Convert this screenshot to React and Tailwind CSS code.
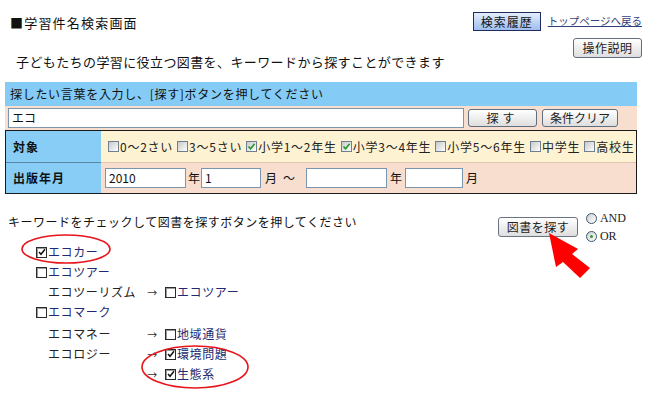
import React from 'react';

const jp = { fontFamily: '"Noto Sans CJK JP", "Noto Sans", sans-serif' };

// 画面上部のボタン（グレーのグラデーション）
function GrayButton({ children, className = '' }) {
  return (
    <button
      className={`flex items-center justify-center rounded-[3px] border border-[#5f6f80] bg-linear-to-b from-white to-[#dedede] text-[12px] leading-none text-[#222] ${className}`}
    >
      {children}
    </button>
  );
}

// 条件欄のチェックボックス（緑のチェック）
function FormCheck({ checked }) {
  return (
    <span className="flex h-[11px] w-[11px] shrink-0 items-center justify-center border border-[#6f7f90] bg-linear-to-br from-[#c9c9c9] to-white">
      {checked && (
        <svg width="9" height="9" viewBox="0 0 9 9">
          <path d="M1.5 4.5 L3.6 6.8 L7.6 1.8" fill="none" stroke="#1e9a2a" strokeWidth="1.6" />
        </svg>
      )}
    </span>
  );
}

// キーワード一覧のチェックボックス（黒枠）
function TreeCheck({ checked }) {
  return (
    <span className="mr-[1px] flex h-[11px] w-[11px] shrink-0 items-center justify-center border-[1.5px] border-[#2b2b2b] bg-white shadow-[inset_1px_1px_0_#9a9a9a]">
      {checked && (
        <svg width="8" height="8" viewBox="0 0 8 8">
          <path d="M1 4 L3 6.3 L7 1.3" fill="none" stroke="#111" strokeWidth="1.5" />
        </svg>
      )}
    </span>
  );
}

function TextBox({ value = '', className = '' }) {
  return (
    <div className={`flex h-[20px] items-center border border-[#7d96b0] bg-white px-[3px] text-[12px] text-[#111] ${className}`}>
      {value}
    </div>
  );
}

function Arrow() {
  return <span className="w-[25px] text-center text-[10px] text-[#333]">→</span>;
}

function Keyword({ checked, children }) {
  return (
    <span className="flex items-center">
      <TreeCheck checked={checked} />
      <span className="text-[12px] tracking-[0.6px] text-[#1f2b70]">{children}</span>
    </span>
  );
}

const targets = [
  ['0～2さい', false],
  ['3～5さい', false],
  ['小学1～2年生', true],
  ['小学3～4年生', true],
  ['小学5～6年生', false],
  ['中学生', false],
  ['高校生', false],
];

export default function App() {
  return (
    <div className="relative h-[397px] w-[650px] overflow-hidden bg-white text-[#111]" style={jp}>
      {/* ヘッダー */}
      <div className="flex justify-between pt-[12px]">
        <div>
          <div className="ml-[10px] mt-[3px] text-[13px] leading-[16px] tracking-[1.2px]">■学習件名検索画面</div>
          <div className="ml-[16px] mt-[23px] text-[13px] leading-[16px] tracking-[0.4px]">
            子どもたちの学習に役立つ図書を、キーワードから探すことができます
          </div>
        </div>
        <div className="flex flex-col items-end pr-[8px]">
          <div className="flex items-center">
            <button className="flex h-[19px] w-[68px] items-center justify-center border border-[#1f2d5c] bg-linear-to-b from-[#e4eefc] to-[#9fbdf0] text-[12px] leading-none tracking-[1px]">
              検索履歴
            </button>
            <a className="ml-[7px] text-[10.5px] leading-none text-[#34407a] underline">トップページへ戻る</a>
          </div>
          <GrayButton className="mt-[7px] h-[20px] w-[69px] tracking-[0.5px]">操作説明</GrayButton>
        </div>
      </div>

      {/* 検索条件 */}
      <div className="ml-[5px] mt-[12px] w-[632px]">
        <div className="flex h-[24px] items-center bg-[#84cbf6] pl-[5px] text-[12px] tracking-[0.7px]">
          探したい言葉を入力し、[探す]ボタンを押してください
        </div>
        <div className="flex h-[24px] items-center bg-[#f8decf] pl-[3px]">
          <TextBox value="エコ" className="h-[19px] w-[456px]" />
          <GrayButton className="ml-[4px] h-[18px] w-[69px] tracking-[4px]">探す</GrayButton>
          <GrayButton className="ml-[5px] h-[18px] w-[76px]">条件クリア</GrayButton>
        </div>
        <div className="grid grid-cols-[95px_1fr] border border-[#1b1b1b]">
          <div className="flex h-[31px] items-center bg-[#87cdf6] pl-[7px] text-[12px] font-bold tracking-[1px]">対象</div>
          <div className="flex h-[31px] items-center gap-[4px] bg-[#fdf3d3] pl-[7px] text-[12px] tracking-[0.75px] text-[#222]">
            {targets.map(([label, checked]) => (
              <span key={label} className="flex items-center gap-[1px]">
                <FormCheck checked={checked} />
                {label}
              </span>
            ))}
          </div>
          <div className="flex h-[31px] items-center border-t border-[#5d87a8] bg-[#87cdf6] pl-[7px] text-[12px] font-bold tracking-[1px]">
            出版年月
          </div>
          <div className="flex h-[31px] items-center border-t border-[#e2c2b0] bg-[#f8decf] pl-[4px] text-[12px]">
            <TextBox value="2010" className="w-[81px]" />
            <span className="w-[15px] pl-[2px]">年</span>
            <TextBox value="1" className="w-[60px]" />
            <span className="pl-[4px]">月</span>
            <span className="pl-[6px]">～</span>
            <TextBox className="ml-[11px] w-[81px]" />
            <span className="w-[18px] pl-[3px]">年</span>
            <TextBox className="w-[58px]" />
            <span className="pl-[3px]">月</span>
          </div>
        </div>
      </div>

      {/* キーワード選択 */}
      <div className="mt-[15px] flex items-start">
        <div className="ml-[8px] mt-[5px] text-[12px] leading-[16px] tracking-[0.5px]">
          キーワードをチェックして図書を探すボタンを押してください
        </div>
        <GrayButton className="ml-[141px] mt-[8px] h-[20px] w-[80px] !border-[#6a7480] tracking-[0.5px]">図書を探す</GrayButton>
        <div className="ml-[8px] flex flex-col text-[12px] leading-[18px] text-[#222]" style={{ fontFamily: '"Liberation Serif", serif' }}>
          <span className="flex items-center gap-[3px]">
            <span className="h-[11px] w-[11px] rounded-full border border-[#3c5670] bg-linear-to-br from-[#d0d0d0] to-white" />
            AND
          </span>
          <span className="flex items-center gap-[3px]">
            <span className="flex h-[11px] w-[11px] items-center justify-center rounded-full border border-[#3c5670] bg-linear-to-br from-[#d0d0d0] to-white">
              <span className="h-[3px] w-[3px] rounded-full bg-[#2f9a3a]" />
            </span>
            OR
          </span>
        </div>
      </div>

      <div className="ml-[36px] mt-[-3px] flex flex-col text-[12px] tracking-[0.6px]">
        <div className="flex h-[20px] items-center">
          <Keyword checked>エコカー</Keyword>
        </div>
        <div className="flex h-[20px] items-center">
          <Keyword>エコツアー</Keyword>
        </div>
        <div className="flex h-[20px] items-center">
          <span className="ml-[12px] w-[92px] text-[#222]">エコツーリズム</span>
          <Arrow />
          <Keyword>エコツアー</Keyword>
        </div>
        <div className="flex h-[20px] items-center">
          <Keyword>エコマーク</Keyword>
        </div>
        <div className="mt-[2px] flex h-[20px] items-center">
          <span className="ml-[12px] w-[92px] text-[#222]">エコマネー</span>
          <Arrow />
          <Keyword>地域通貨</Keyword>
        </div>
        <div className="flex h-[20px] items-center">
          <span className="ml-[12px] w-[92px] text-[#222]">エコロジー</span>
          <Arrow />
          <Keyword checked>環境問題</Keyword>
        </div>
        <div className="flex h-[20px] items-center">
          <span className="ml-[12px] w-[92px]" />
          <Arrow />
          <Keyword checked>生態系</Keyword>
        </div>
      </div>

      {/* 注釈（赤い丸と矢印） */}
      <svg className="pointer-events-none absolute left-0 top-0" width="650" height="397">
        <ellipse cx="66" cy="249" rx="44" ry="14" fill="none" stroke="#e8141b" strokeWidth="1.6" />
        <ellipse cx="195" cy="367" rx="53" ry="21" fill="none" stroke="#e8141b" strokeWidth="1.6" />
        <polygon points="549,233 578,249 572,254 590,268 580,278 563,262 556,267" fill="#ff0000" />
      </svg>
    </div>
  );
}
